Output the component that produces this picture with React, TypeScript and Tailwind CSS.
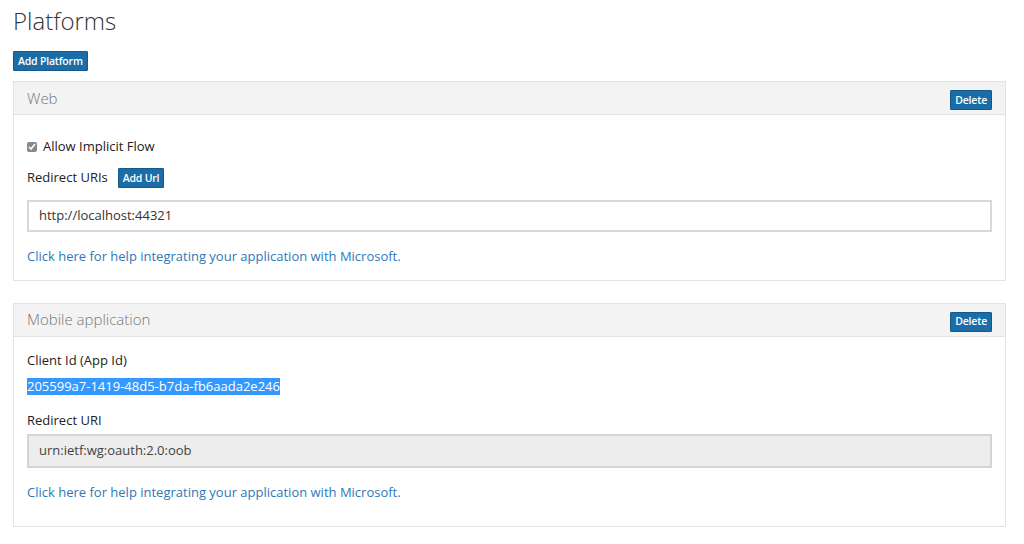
import React from "react";

const font = { fontFamily: '"Open Sans", "Noto Sans", sans-serif' };

function Btn({ children, className = "" }: { children: React.ReactNode; className?: string }) {
  return (
    <button className={`flex items-center bg-[#1a6da6] text-white text-[10.5px] font-semibold leading-none tracking-[-0.2px] px-[4px] border border-[#15598a] rounded-[1px] ${className}`}>
      {children}
    </button>
  );
}

function Panel({ title, children }: { title: string; children: React.ReactNode }) {
  return (
    <div className="border border-[#e3e3e3] bg-white">
      <div className="flex items-center justify-between h-[33px] bg-[#f3f3f3] border-b border-[#e3e3e3] pl-[13px] pr-[13px]">
        <span className="text-[15px] text-[#767676] font-light">{title}</span>
        <Btn className="h-[20px] mt-[4px]">Delete</Btn>
      </div>
      <div className="px-[13px]">{children}</div>
    </div>
  );
}

const helpLink = (
  <a className="block text-[13px] text-[#2f78b8]">Click here for help integrating your application with Microsoft.</a>
);

export default function App() {
  return (
    <div className="w-[1024px] h-[544px] bg-white text-[#222] overflow-hidden" style={font}>
      <div className="pl-[13px] pr-[18px]">
        <h1 className="text-[24px] font-light text-[#333] leading-none pt-[9px] h-[51px]">Platforms</h1>
        <Btn className="h-[20px]">Add Platform</Btn>

        <div className="mt-[10px]">
          <Panel title="Web">
            <div className="pt-[24px] pb-[13px]">
              <label className="flex items-center h-[16px] text-[13px]">
                <input type="checkbox" defaultChecked className="w-[10px] h-[10px] accent-[#888] mr-[6px] ml-0" />
                Allow Implicit Flow
              </label>
              <div className="flex items-center mt-[13px] h-[20px]">
                <span className="text-[13px] mr-[10px]">Redirect URIs</span>
                <Btn className="h-[20px]">Add Url</Btn>
              </div>
              <div className="mt-[12px] h-[32px] border-2 border-[#d8d8d8] flex items-center pl-[10px] text-[13px] text-[#333]">
                http://localhost:44321
              </div>
              <div className="mt-[15px]">{helpLink}</div>
            </div>
          </Panel>
        </div>

        <div className="mt-[22px]">
          <Panel title="Mobile application">
            <div className="pt-[14px] pb-[24px]">
              <div className="text-[13px] h-[20px]">Client Id (App Id)</div>
              <div className="mt-[7px] h-[17px] flex items-center">
                <span className="bg-[#3399ff] text-white text-[13px] leading-[17px]">205599a7-1419-48d5-b7da-fb6aada2e246</span>
              </div>
              <div className="text-[13px] mt-[16px] h-[20px]">Redirect URI</div>
              <div className="mt-[3px] h-[34px] border-2 border-[#d4d4d4] bg-[#ededed] flex items-center pl-[10px] text-[13px] text-[#444]">
                urn:ietf:wg:oauth:2.0:oob
              </div>
              <div className="mt-[15px]">{helpLink}</div>
            </div>
          </Panel>
        </div>
      </div>
    </div>
  );
}
